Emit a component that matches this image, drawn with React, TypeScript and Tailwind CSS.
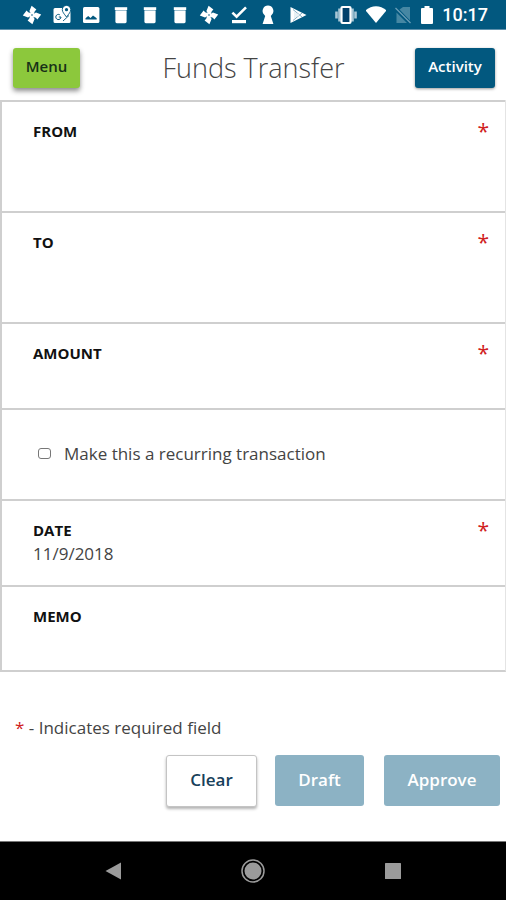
import type { ReactNode } from 'react';

function StatusIcon({ children, label }: { children: ReactNode; label: string }) {
    return (
        <svg viewBox="0 0 20 20" className="size-5 shrink-0 fill-white" role="img" aria-label={label}>
            {children}
        </svg>
    );
}

function Pinwheel() {
    return (
        <StatusIcon label="Photos">
            {[0, 90, 180, 270].map((angle) => (
                <path key={angle} d="M10 10.5L7.4 6L9.6 0.8L14.4 4.6L12.8 6.2L11.5 10z" transform={`rotate(${angle} 10 10)`} />
            ))}
            <circle cx="10" cy="10" r="0.8" fill="#02587f" />
        </StatusIcon>
    );
}

function Trash() {
    return (
        <StatusIcon label="Storage">
            <path d="M3.8 2.2h12.4v2.8H3.8z" />
            <path d="M4.4 5h11.2v1.2H4.4z" fill="#9fc0d0" />
            <path d="M4.4 6h11.2v10.8a1.4 1.4 0 0 1-1.4 1.4H5.8a1.4 1.4 0 0 1-1.4-1.4z" />
        </StatusIcon>
    );
}

function StatusBar() {
    return (
        <div className="flex h-[30px] items-center justify-between border-b border-[#5f91ad] bg-[#02587f] pt-px pr-[18px] pl-[22px]">
            <div className="flex w-[286px] items-center justify-between">
                <Pinwheel />
                <StatusIcon label="Maps">
                    <path d="M3 3h14a1.5 1.5 0 0 1 1.5 1.5v12a1.5 1.5 0 0 1-1.5 1.5H3a1.5 1.5 0 0 1-1.5-1.5v-12A1.5 1.5 0 0 1 3 3z" />
                    <path d="M11 16L17 10.5" stroke="#02587f" strokeWidth="0.9" />
                    <path d="M9 12a2.6 2.6 0 1 1-1.2-2.2M6.8 12H9" fill="none" stroke="#02587f" strokeWidth="1" />
                    <path d="M14.5 12c-2.5-3.3-4.2-5-4.2-7.4a4.2 4.2 0 0 1 8.4 0c0 2.4-1.7 4.1-4.2 7.4z" stroke="#02587f" strokeWidth="0.9" />
                    <circle cx="14.5" cy="4.7" r="1.6" fill="#02587f" />
                </StatusIcon>
                <StatusIcon label="Image">
                    <rect x="2" y="2" width="16.4" height="16" rx="1.5" />
                    <path d="M4.5 14.6v-1.4l2.7-2.2 2.3 2 2.5-2.5 3.7 2.7v1.4z" fill="#02587f" />
                </StatusIcon>
                <Trash />
                <Trash />
                <Trash />
                <Pinwheel />
                <StatusIcon label="Download complete">
                    <path d="M3.4 7.6l4.2 4L17 2.4" fill="none" stroke="white" strokeWidth="2.6" />
                    <path d="M3 15h14v3.2H3z" />
                </StatusIcon>
                <StatusIcon label="Keyhole">
                    <path d="M10 0.5a5.4 5.4 0 0 0-4 9L7.2 11L4.6 19h10.8l-2.6-8L14 9.5A5.4 5.4 0 0 0 10 0.5z" />
                </StatusIcon>
                <StatusIcon label="Play">
                    <path d="M2.5 2L18.5 10L2.5 18z" />
                    <path d="M5 4.5l9 7.5M5 15.5l9-7.5" fill="none" stroke="#5f96b0" strokeWidth="0.8" />
                    <path d="M6 6.5l6 3.5-6 3.5z" fill="#e8f1f5" />
                </StatusIcon>
            </div>
            <div className="flex items-center gap-2 text-white">
                <svg viewBox="0 0 24 20" className="h-5 w-6" role="img" aria-label="Vibrate">
                    <path d="M2.5 6.5v7M21.5 6.5v7M5.5 3.5v13M18.5 3.5v13" fill="none" stroke="#a9c7d6" strokeWidth="2.6" />
                    <rect x="7.5" y="2" width="9" height="16" rx="1" fill="#02406a" stroke="white" strokeWidth="2.2" />
                </svg>
                <StatusIcon label="Wi-Fi">
                    <path d="M10 18L-0.5 5.5C5-0.2 15-0.2 20.5 5.5z" />
                </StatusIcon>
                <svg viewBox="0 0 18 20" className="h-5 w-[18px]" role="img" aria-label="No SIM">
                    <path d="M16 2v13.5L5.5 4.5L9 2zM2.5 7.5L13 18H2.5z" fill="#4687a3" />
                    <path d="M1.5 3L16.5 18" stroke="#6c9fb8" strokeWidth="1.2" />
                </svg>
                <svg viewBox="0 0 14 20" className="h-5 w-[14px] fill-white" role="img" aria-label="Battery">
                    <path d="M4.5 1h5v2h2.5a1 1 0 0 1 1 1v14a1 1 0 0 1-1 1h-10a1 1 0 0 1-1-1V4a1 1 0 0 1 1-1H4.5z" />
                </svg>
                <span className="font-[Roboto,sans-serif] text-[18px] leading-5 font-medium">10:17</span>
            </div>
        </div>
    );
}

type FieldProps = {
    id: string;
    label: string;
    required?: boolean;
    className: string;
    children: ReactNode;
};

function Field({ id, label, required, className, children }: FieldProps) {
    return (
        <div className={`border-t-2 border-[#cfcfcf] pt-[19px] pr-4 pl-[31px] ${className}`}>
            <div className="flex h-5 items-center justify-between">
                <label htmlFor={id} className="text-[15px] leading-5 font-bold text-[#111]">{label}</label>
                {required && <span className="text-[21px] leading-5 text-[#d02020]" aria-hidden="true">*</span>}
            </div>
            {children}
        </div>
    );
}

const control = 'block h-[26px] w-full appearance-none bg-transparent text-[17px] leading-6 text-[#444] outline-none';

export default function App() {
    return (
        <div className="flex min-h-screen flex-col bg-white font-['Open_Sans',sans-serif] text-[#444]">
            <StatusBar />

            <header className="flex h-[70px] items-center justify-between pt-[6px] pr-[11px] pl-[13px]">
                <button type="button" className="h-10 w-[67px] rounded-[3px] bg-[#8cc83c] pb-[3px] text-[15px] font-semibold text-[#173017] shadow-[0_3px_5px_rgba(0,0,0,0.45)]">
                    Menu
                </button>
                <h1 className="pl-3 text-[27px] leading-8 font-light text-[#444]">Funds Transfer</h1>
                <button type="button" className="h-10 w-20 rounded-[3px] bg-[#02587f] pb-[3px] text-[15px] font-semibold text-white shadow-[0_1px_3px_rgba(0,0,0,0.4)]">
                    Activity
                </button>
            </header>

            <form className="flex flex-1 flex-col">
                <div className="border-r border-b-2 border-l-2 border-[#cfcfcf] border-r-[#e4e4e4]">
                    <Field id="from" label="FROM" required className="h-[111px]">
                        <select id="from" className={control} required />
                    </Field>
                    <Field id="to" label="TO" required className="h-[111px]">
                        <select id="to" className={control} required />
                    </Field>
                    <Field id="amount" label="AMOUNT" required className="h-[86px]">
                        <input id="amount" type="text" inputMode="decimal" className={control} required />
                    </Field>

                    <div className="flex h-[91px] items-center border-t-2 border-[#cfcfcf] pb-[2px] pl-9">
                        <input id="recurring" type="checkbox" className="h-[11px] w-[13px] appearance-none rounded-[3px] border border-[#777] bg-white checked:bg-[#02587f]" />
                        <label htmlFor="recurring" className="pl-[13px] text-[17px] leading-6">
                            Make this a recurring transaction
                        </label>
                    </div>

                    <Field id="date" label="DATE" required className="h-[86px]">
                        <input id="date" type="text" defaultValue="11/9/2018" className={control} required />
                    </Field>
                    <Field id="memo" label="MEMO" className="h-[85px]">
                        <input id="memo" type="text" className={control} />
                    </Field>
                </div>

                <p className="pt-11 pl-[15px] text-[17px] leading-6">
                    <span className="text-[#d02020]">*</span> - Indicates required field
                </p>

                <div className="flex justify-end pt-[15px] pr-[6px] pb-[34px] text-[17px] font-semibold">
                    <button type="reset" className="mr-[18px] h-[52px] w-[91px] rounded-[3px] border border-[#c4c4c4] bg-white pb-[3px] text-[#17405a] shadow-[0_2px_3px_rgba(0,0,0,0.3)]">
                        Clear
                    </button>
                    <button type="button" className="mr-5 h-[51px] w-[89px] rounded-[3px] bg-[#8cb2c4] pb-[2px] text-white">
                        Draft
                    </button>
                    <button type="submit" className="h-[51px] w-[116px] rounded-[3px] bg-[#8cb2c4] pb-[2px] text-white">
                        Approve
                    </button>
                </div>
            </form>

            <nav className="flex h-[59px] items-center justify-center gap-[116px] border-t border-[#777] bg-black">
                <button type="button" aria-label="Back">
                    <svg viewBox="0 0 24 24" className="size-6 fill-[#9b9b9b]">
                        <path d="M4.5 12L20 3.5v17z" />
                    </svg>
                </button>
                <button type="button" aria-label="Home">
                    <svg viewBox="0 0 24 24" className="size-6">
                        <circle cx="12" cy="12" r="11" fill="none" stroke="#9b9b9b" strokeWidth="1.5" />
                        <circle cx="12" cy="12" r="8.5" fill="#9b9b9b" />
                    </svg>
                </button>
                <button type="button" aria-label="Recent apps">
                    <svg viewBox="0 0 24 24" className="size-6 fill-[#9b9b9b]">
                        <rect x="4" y="4" width="16" height="16" rx="0.5" />
                    </svg>
                </button>
            </nav>
        </div>
    );
}
